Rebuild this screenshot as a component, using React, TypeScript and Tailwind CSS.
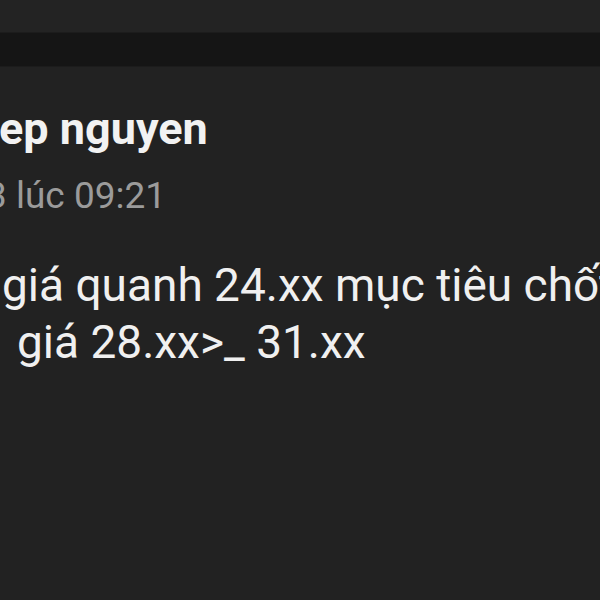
import React from 'react';

export default function App() {
  return (
    <div className="w-[600px] h-[600px] overflow-hidden bg-[#222222] font-['Roboto',sans-serif]">
      {/* top bars */}
      <div className="h-[32px] bg-[#232323]" />
      <div className="h-[35px] bg-[#151515] border-t border-[#1c1c1c] border-b" />

      {/* post */}
      <div className="pt-[39px] whitespace-nowrap">
        <div className="text-[45px] leading-[45px] font-bold text-[#f2f2f2] ml-[-1px]">ep nguyen</div>
        <div className="mt-[26px] text-[37px] leading-[37px] text-[#9b9b9b] ml-[-14px]">3 lúc 09:21</div>
        <div className="mt-[43px] text-[46px] leading-[57px] text-[#f0f0f0]">
          <div className="ml-[2px]">giá quanh 24.xx mục tiêu chốt</div>
          <div className="ml-[17px]">giá 28.xx&gt;_ 31.xx</div>
        </div>
      </div>
    </div>
  );
}
